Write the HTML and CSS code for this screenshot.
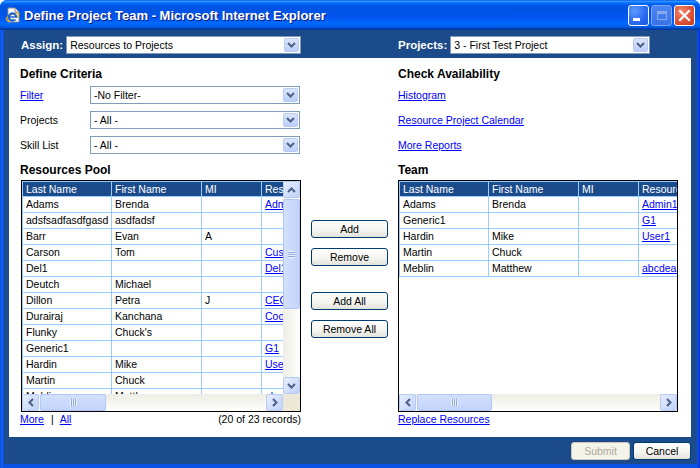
FILE: index.html
```html
<!DOCTYPE html>
<html>
<head>
<meta charset="utf-8">
<link rel="stylesheet" href="styles.css">
</head>
<body>
<div class="window">
  <div class="titlebar">
    <svg class="ie" width="16" height="16" viewBox="0 0 16 16">
      <polygon points="3,1 10,1 14,5 14,15 3,15" fill="#fff" stroke="#8c8c8c" stroke-width="1"/>
      <polyline points="10,1 10,5 14,5" fill="#e6e6e6" stroke="#8c8c8c" stroke-width="1"/>
      <ellipse cx="7.5" cy="10" rx="6.5" ry="2.6" fill="none" stroke="#f0b400" stroke-width="1.2" transform="rotate(-25 7.5 10)"/>
      <circle cx="7.5" cy="10" r="3.6" fill="none" stroke="#1a62d6" stroke-width="2.2"/>
      <line x1="4" y1="10" x2="11" y2="10" stroke="#1a62d6" stroke-width="1.6"/>
      <rect x="9" y="10.8" width="3" height="1.6" fill="#fff"/>
    </svg>
    <span class="title">Define Project Team - Microsoft Internet Explorer</span>
    <div class="tbtns">
      <span class="tb tb-min"><span class="min-bar"></span></span>
      <span class="tb tb-max"><span class="max-box"></span></span>
      <span class="tb tb-close">
        <svg width="13" height="13" viewBox="0 0 13 13"><path d="M2 2 L11 11 M11 2 L2 11" stroke="#fff" stroke-width="2.2" stroke-linecap="square"/></svg>
      </span>
    </div>
  </div>

  <div class="client">
    <div class="topbar">
      <div class="tgroup tg-assign">
        <span class="tlabel">Assign:</span>
        <div class="select w-assign"><span class="stxt">Resources to Projects</span><span class="dd"><svg width="9" height="6" viewBox="0 0 9 6"><polyline points="1,1 4.5,4.5 8,1" fill="none" stroke="#4d6185" stroke-width="2"/></svg></span></div>
      </div>
      <div class="tgroup">
        <span class="tlabel">Projects:</span>
        <div class="select w-proj"><span class="stxt">3 - First Test Project</span><span class="dd"><svg width="9" height="6" viewBox="0 0 9 6"><polyline points="1,1 4.5,4.5 8,1" fill="none" stroke="#4d6185" stroke-width="2"/></svg></span></div>
      </div>
    </div>

    <div class="panel">
      <div class="col">
        <h3 class="head">Define Criteria</h3>
        <div class="rows">
          <div class="crow"><a class="clabel link" href="#">Filter</a><div class="select w-crit"><span class="stxt">-No Filter-</span><span class="dd"><svg width="9" height="6" viewBox="0 0 9 6"><polyline points="1,1 4.5,4.5 8,1" fill="none" stroke="#4d6185" stroke-width="2"/></svg></span></div></div>
          <div class="crow"><span class="clabel">Projects</span><div class="select w-crit"><span class="stxt">- All -</span><span class="dd"><svg width="9" height="6" viewBox="0 0 9 6"><polyline points="1,1 4.5,4.5 8,1" fill="none" stroke="#4d6185" stroke-width="2"/></svg></span></div></div>
          <div class="crow"><span class="clabel">Skill List</span><div class="select w-crit"><span class="stxt">- All -</span><span class="dd"><svg width="9" height="6" viewBox="0 0 9 6"><polyline points="1,1 4.5,4.5 8,1" fill="none" stroke="#4d6185" stroke-width="2"/></svg></span></div></div>
        </div>
        <h3 class="head head2">Resources Pool</h3>
        <div class="gbox gbox-left">
          <div class="viewport">
            <table class="dt">
              <tr><th class="c1">Last Name</th><th class="c2">First Name</th><th class="c3">MI</th><th class="c4">Resource Name</th></tr>
              <tr><td>Adams</td><td>Brenda</td><td></td><td><a class="link" href="#">Admin1</a></td></tr>
              <tr><td>adsfsadfasdfgasd</td><td>asdfadsf</td><td></td><td></td></tr>
              <tr><td>Barr</td><td>Evan</td><td>A</td><td></td></tr>
              <tr><td>Carson</td><td>Tom</td><td></td><td><a class="link" href="#">Customer1</a></td></tr>
              <tr><td>Del1</td><td></td><td></td><td><a class="link" href="#">Del1</a></td></tr>
              <tr><td>Deutch</td><td>Michael</td><td></td><td></td></tr>
              <tr><td>Dillon</td><td>Petra</td><td>J</td><td><a class="link" href="#">CEO1</a></td></tr>
              <tr><td>Durairaj</td><td>Kanchana</td><td></td><td><a class="link" href="#">Coordinator</a></td></tr>
              <tr><td>Flunky</td><td>Chuck's</td><td></td><td></td></tr>
              <tr><td>Generic1</td><td></td><td></td><td><a class="link" href="#">G1</a></td></tr>
              <tr><td>Hardin</td><td>Mike</td><td></td><td><a class="link" href="#">User1</a></td></tr>
              <tr><td>Martin</td><td>Chuck</td><td></td><td></td></tr>
              <tr><td>Meblin</td><td>Matthew</td><td></td><td><a class="link" href="#">abcdeabcde</a></td></tr>
            </table>
          </div>
          <div class="vs">
            <span class="sbtn"><svg width="9" height="6" viewBox="0 0 9 6"><polyline points="1,5 4.5,1.5 8,5" fill="none" stroke="#4d6185" stroke-width="2"/></svg></span>
            <span class="vthumb"><span class="grip-v"></span></span>
            <span class="vtrack"></span>
            <span class="sbtn"><svg width="9" height="6" viewBox="0 0 9 6"><polyline points="1,1 4.5,4.5 8,1" fill="none" stroke="#4d6185" stroke-width="2"/></svg></span>
          </div>
          <div class="hs">
            <span class="sbtn"><svg width="6" height="9" viewBox="0 0 6 9"><polyline points="5,1 1.5,4.5 5,8" fill="none" stroke="#4d6185" stroke-width="2"/></svg></span>
            <span class="hthumb hthumb-left"><span class="grip-h"></span></span>
            <span class="htrack"></span>
            <span class="sbtn"><svg width="6" height="9" viewBox="0 0 6 9"><polyline points="1,1 4.5,4.5 1,8" fill="none" stroke="#4d6185" stroke-width="2"/></svg></span>
          </div>
          <div class="corner"></div>
        </div>
        <div class="under">
          <span><a class="link" href="#">More</a><span class="sep">|</span><a class="link" href="#">All</a></span>
          <span>(20 of 23 records)</span>
        </div>
      </div>

      <div class="col mid">
        <button class="btn">Add</button>
        <button class="btn">Remove</button>
        <button class="btn btn-gap">Add All</button>
        <button class="btn">Remove All</button>
      </div>

      <div class="col">
        <h3 class="head">Check Availability</h3>
        <div class="rows">
          <div class="crow"><a class="link" href="#">Histogram</a></div>
          <div class="crow"><a class="link" href="#">Resource Project Calendar</a></div>
          <div class="crow"><a class="link" href="#">More Reports</a></div>
        </div>
        <h3 class="head head2">Team</h3>
        <div class="gbox gbox-right">
          <div class="viewport">
            <table class="dt">
              <tr><th class="c1">Last Name</th><th class="c2">First Name</th><th class="c3">MI</th><th class="c4">Resource Name</th></tr>
              <tr><td>Adams</td><td>Brenda</td><td></td><td><a class="link" href="#">Admin1</a></td></tr>
              <tr><td>Generic1</td><td></td><td></td><td><a class="link" href="#">G1</a></td></tr>
              <tr><td>Hardin</td><td>Mike</td><td></td><td><a class="link" href="#">User1</a></td></tr>
              <tr><td>Martin</td><td>Chuck</td><td></td><td></td></tr>
              <tr><td>Meblin</td><td>Matthew</td><td></td><td><a class="link" href="#">abcdeabcde</a></td></tr>
            </table>
          </div>
          <div class="hs">
            <span class="sbtn"><svg width="6" height="9" viewBox="0 0 6 9"><polyline points="5,1 1.5,4.5 5,8" fill="none" stroke="#4d6185" stroke-width="2"/></svg></span>
            <span class="hthumb hthumb-right"><span class="grip-h"></span></span>
            <span class="htrack"></span>
            <span class="sbtn"><svg width="6" height="9" viewBox="0 0 6 9"><polyline points="1,1 4.5,4.5 1,8" fill="none" stroke="#4d6185" stroke-width="2"/></svg></span>
          </div>
        </div>
        <div class="under">
          <a class="link" href="#">Replace Resources</a>
        </div>
      </div>
    </div>

    <div class="footer">
      <button class="btn fbtn" disabled>Submit</button>
      <button class="btn fbtn">Cancel</button>
    </div>
  </div>
</div>
</body>
</html>
```

FILE: styles.css
```css
html, body {
  margin: 0;
  padding: 0;
}
body {
  width: 700px;
  height: 468px;
  overflow: hidden;
  background: #ffffff;
  font-family: "Liberation Sans", Arial, sans-serif;
  font-size: 10.5px;
  color: #000;
}
.window {
  width: 700px;
  height: 468px;
  display: flex;
  flex-direction: column;
  background: linear-gradient(to right, #0831d9 0, #166aee 1px, #0a52e4 3px, #0a52e4 697px, #0831d9 700px);
  border-radius: 7px 7px 0 0;
  overflow: hidden;
}
.titlebar {
  height: 30px;
  flex: none;
  display: flex;
  align-items: center;
  padding-left: 5px;
  box-sizing: border-box;
  background: linear-gradient(to bottom, #0058ee 0%, #3593ff 4%, #288eff 6%, #127dff 8%, #036ffc 10%, #0262ee 14%, #0057e5 20%, #0054e3 24%, #0055eb 56%, #005bf5 66%, #026afe 76%, #0062ef 86%, #0052d6 92%, #0040ab 96%, #003092 100%);
}
.ie {
  flex: none;
  margin-right: 3px;
  margin-top: -1px;
}
.title {
  color: #fff;
  font-weight: bold;
  font-size: 13px;
  text-shadow: 1px 1px 0 #0a1883;
  white-space: nowrap;
}
.tbtns {
  margin-left: auto;
  display: flex;
  gap: 2px;
  padding-right: 5px;
  margin-top: 1px;
}
.tb {
  width: 21px;
  height: 21px;
  box-sizing: border-box;
  border: 1px solid #fff;
  border-radius: 3px;
  display: flex;
  align-items: center;
  justify-content: center;
  position: relative;
}
.tb-min {
  background: radial-gradient(circle at 30% 25%, #5d9bff 0, #2c6cf0 55%, #1a56dc 100%);
}
.min-bar {
  position: absolute;
  left: 4px;
  bottom: 4px;
  width: 7px;
  height: 3px;
  background: #fff;
}
.tb-max {
  background: linear-gradient(#4a86f2, #3a72e6);
  border-color: #7ea3f0;
}
.max-box {
  width: 10px;
  height: 9px;
  box-sizing: border-box;
  border: 1px solid #86a9ee;
  border-top-width: 3px;
}
.tb-close {
  background: radial-gradient(circle at 35% 30%, #f08a6c 0, #e1553a 50%, #c43a1c 100%);
}

.client {
  flex: 1;
  margin: 0 3px 4px 4px;
  background: #1c4b8b;
  display: flex;
  flex-direction: column;
}
.topbar {
  height: 28px;
  flex: none;
  box-sizing: border-box;
  padding-top: 6px;
  display: flex;
  align-items: flex-start;
}
.tgroup {
  display: flex;
  align-items: center;
}
.tg-assign {
  width: 394px;
  box-sizing: border-box;
  padding-left: 17px;
}
.tlabel {
  color: #fff;
  font-weight: bold;
  font-size: 11.5px;
  margin-right: 3px;
  line-height: 18px;
}

.select {
  display: flex;
  align-items: center;
  height: 18px;
  box-sizing: border-box;
  border: 1px solid #7f9db9;
  background: #fff;
  padding-left: 3px;
}
.stxt {
  flex: 1;
  white-space: nowrap;
  overflow: hidden;
}
.dd {
  width: 15px;
  height: 14px;
  margin: 1px;
  box-sizing: border-box;
  border: 1px solid #b9cbf3;
  border-radius: 2px;
  background: linear-gradient(#dae5fd, #bccff9);
  display: flex;
  align-items: center;
  justify-content: center;
}
.w-assign { width: 235px; }
.w-proj { width: 200px; }
.w-crit { width: 210px; }

.panel {
  margin: 0 6px 0 5px;
  background: #fff;
  height: 379px;
  box-sizing: border-box;
  padding: 8px 13px 0 11px;
  display: grid;
  grid-template-columns: 281px 97px 280px;
  align-items: start;
}
.col {
  display: flex;
  flex-direction: column;
}
.head {
  margin: 0;
  font-size: 12px;
  font-weight: bold;
  line-height: 16px;
}
.head2 {
  margin-top: 8px;
}
.rows {
  margin-top: 4px;
  display: flex;
  flex-direction: column;
  gap: 7px;
}
.crow {
  height: 18px;
  display: flex;
  align-items: center;
}
.clabel {
  width: 70px;
  flex: none;
}
.link {
  color: #0000ff;
  text-decoration: underline;
}

.gbox {
  margin-top: 2px;
  height: 232px;
  width: 280px;
  box-sizing: border-box;
  border: 1px solid #000;
  display: grid;
  grid-template-rows: 213px 17px;
  background: #fff;
}
.gbox-left {
  margin-left: 1px;
  grid-template-columns: 261px 17px;
}
.gbox-right {
  grid-template-columns: 278px;
}
.viewport {
  overflow: hidden;
  background: #fff;
}
.dt {
  border-collapse: separate;
  border-spacing: 0;
  table-layout: fixed;
  width: 360px;
}
.dt th, .dt td {
  box-sizing: border-box;
  border-right: 1px solid #99ccff;
  border-bottom: 1px solid #99ccff;
  padding: 0 0 0 3px;
  white-space: nowrap;
  overflow: hidden;
  text-align: left;
  font-weight: normal;
}
.dt th {
  background: #1c4b8b;
  color: #fff;
  height: 16px;
  border-top: 1px solid #99ccff;
  line-height: 14px;
}
.dt td {
  height: 16px;
  line-height: 15px;
}
.dt th:first-child, .dt td:first-child {
  border-left: 1px solid #99ccff;
}
.c1 { width: 90px; }
.c2 { width: 90px; }
.c3 { width: 60px; }
.c4 { width: 120px; }

.vs {
  display: flex;
  flex-direction: column;
  background: linear-gradient(to right, #eeede5, #fefefb);
}
.hs {
  display: flex;
  background: linear-gradient(#eeede5, #fefefb);
}
.sbtn {
  width: 17px;
  height: 17px;
  flex: none;
  box-sizing: border-box;
  border: 1px solid #b8cbf4;
  border-radius: 2px;
  background: linear-gradient(135deg, #e6eefe, #c0d2fa);
  display: flex;
  align-items: center;
  justify-content: center;
}
.vthumb {
  height: 110px;
  flex: none;
  margin-top: 1px;
  box-sizing: border-box;
  border: 1px solid #b1c7f5;
  border-radius: 2px;
  background: linear-gradient(to right, #d3e0fd, #c3d4fb);
  display: flex;
  align-items: center;
  justify-content: center;
}
.grip-v {
  width: 7px;
  height: 7px;
  background: repeating-linear-gradient(to bottom, #eef3fe 0, #eef3fe 1px, #8aa6e6 1px, #8aa6e6 2px);
}
.vtrack { flex: 1; }
.htrack { flex: 1; }
.hthumb {
  flex: none;
  margin-left: 1px;
  box-sizing: border-box;
  border: 1px solid #b1c7f5;
  border-radius: 2px;
  background: linear-gradient(#d3e0fd, #c3d4fb);
  display: flex;
  align-items: center;
  justify-content: center;
}
.hthumb-left { width: 66px; }
.hthumb-right { width: 75px; }
.grip-h {
  width: 7px;
  height: 7px;
  background: repeating-linear-gradient(to right, #eef3fe 0, #eef3fe 1px, #8aa6e6 1px, #8aa6e6 2px);
}
.corner {
  background: #ece9d8;
}
.under {
  margin-top: 0;
  line-height: 14px;
  display: flex;
  justify-content: space-between;
}
.sep {
  margin: 0 6px 0 7px;
}

.mid {
  padding-top: 154px;
  gap: 10px;
}
.btn {
  font-family: "Liberation Sans", Arial, sans-serif;
  font-size: 10.5px;
  height: 18px;
  width: 77px;
  margin-left: 10px;
  padding: 0;
  box-sizing: border-box;
  border: 1px solid #003c74;
  border-radius: 3px;
  background: linear-gradient(#ffffff 0%, #f4f4f0 60%, #e3e1d9 100%);
  color: #000;
  line-height: 16px;
}
.btn-gap {
  margin-top: 16px;
}
.footer {
  flex: 1;
  display: flex;
  justify-content: flex-end;
  gap: 3px;
  padding: 5px 6px 0 0;
}
.fbtn {
  margin-left: 0;
  width: 58px;
}
.fbtn:disabled {
  border-color: #c9c7ba;
  background: #f5f4ea;
  color: #aca899;
  width: 59px;
}
```
